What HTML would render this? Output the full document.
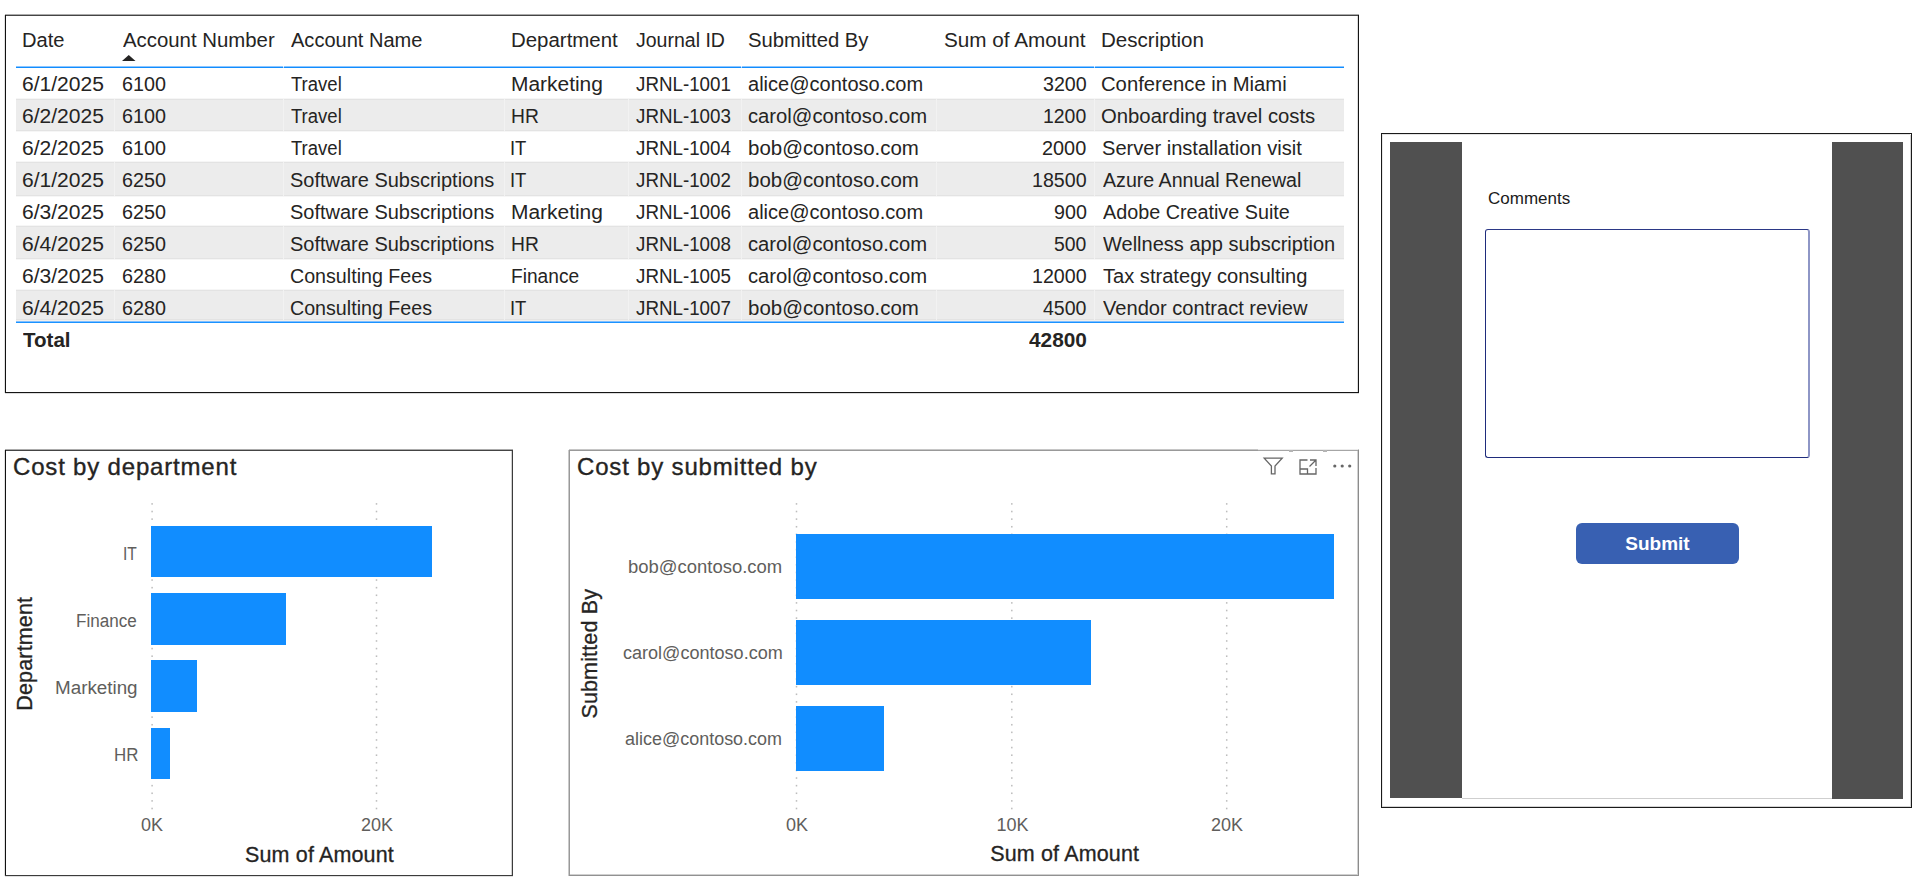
<!DOCTYPE html>
<html><head><meta charset="utf-8">
<style>
html,body{margin:0;padding:0;width:1920px;height:890px;overflow:hidden;background:#fff;}
body{font-family:"Liberation Sans",sans-serif;position:relative;color:#252423;}
.a{position:absolute;white-space:nowrap;}
.t{position:absolute;white-space:nowrap;font-size:20px;line-height:20px;}
.r{text-align:right;}
.g{position:absolute;left:16px;width:1328px;height:32px;background:#ebebeb;}
.v{position:absolute;width:1px;height:32px;background:#f2f2f2;}
.lab{position:absolute;white-space:nowrap;font-size:18px;line-height:18px;color:#605e5c;text-align:right;width:300px;}
.xl{position:absolute;white-space:nowrap;font-size:18px;line-height:18px;color:#605e5c;text-align:center;width:100px;}
.ttl{position:absolute;white-space:nowrap;font-size:24px;line-height:24px;letter-spacing:.82px;color:#252423;-webkit-text-stroke:.35px #252423;}
.axt{position:absolute;white-space:nowrap;font-size:21.5px;line-height:21.5px;letter-spacing:.15px;color:#252423;-webkit-text-stroke:.3px #252423;}
.bar{position:absolute;background:#118dff;}
svg{position:absolute;overflow:visible;}
</style></head><body>
<div class="a" style="left:5px;top:14px;width:1354px;height:1px;background:#ababab"></div><div class="a" style="left:4px;top:15px;width:1px;height:378px;background:#e2e2e2"></div><div class="a" style="left:1357px;top:16px;width:1px;height:376px;background:#dcdcdc"></div><div class="a" style="left:5px;top:393px;width:1354px;height:1px;background:#dcdcdc"></div><div class="a" style="left:5px;top:15px;width:1354px;height:1px;background:#444"></div><div class="a" style="left:5px;top:15px;width:1px;height:378px;background:#111"></div><div class="a" style="left:1358px;top:15px;width:1px;height:378px;background:#151515"></div><div class="a" style="left:5px;top:392px;width:1354px;height:1px;background:#151515"></div>
<div class="g" style="top:98px;height:1px;background:#f6f6f6"></div>
<div class="g" style="top:99px;height:32px;background:#ececec;border-top:1px solid #e3e3e3;border-bottom:1px solid #e3e3e3;box-sizing:border-box"></div>
<div class="g" style="top:131px;height:1px;background:#f6f6f6"></div>
<div class="v" style="left:114px;top:99px;height:32px"></div>
<div class="v" style="left:283px;top:99px;height:32px"></div>
<div class="v" style="left:504px;top:99px;height:32px"></div>
<div class="v" style="left:628px;top:99px;height:32px"></div>
<div class="v" style="left:741px;top:99px;height:32px"></div>
<div class="v" style="left:936px;top:99px;height:32px"></div>
<div class="v" style="left:1094px;top:99px;height:32px"></div>
<div class="g" style="top:161px;height:1px;background:#f6f6f6"></div>
<div class="g" style="top:162px;height:34px;background:#ececec;border-top:1px solid #e3e3e3;border-bottom:1px solid #e3e3e3;box-sizing:border-box"></div>
<div class="g" style="top:196px;height:1px;background:#f6f6f6"></div>
<div class="v" style="left:114px;top:162px;height:34px"></div>
<div class="v" style="left:283px;top:162px;height:34px"></div>
<div class="v" style="left:504px;top:162px;height:34px"></div>
<div class="v" style="left:628px;top:162px;height:34px"></div>
<div class="v" style="left:741px;top:162px;height:34px"></div>
<div class="v" style="left:936px;top:162px;height:34px"></div>
<div class="v" style="left:1094px;top:162px;height:34px"></div>
<div class="g" style="top:225px;height:1px;background:#f6f6f6"></div>
<div class="g" style="top:226px;height:33px;background:#ececec;border-top:1px solid #e3e3e3;border-bottom:1px solid #e3e3e3;box-sizing:border-box"></div>
<div class="g" style="top:259px;height:1px;background:#f6f6f6"></div>
<div class="v" style="left:114px;top:226px;height:33px"></div>
<div class="v" style="left:283px;top:226px;height:33px"></div>
<div class="v" style="left:504px;top:226px;height:33px"></div>
<div class="v" style="left:628px;top:226px;height:33px"></div>
<div class="v" style="left:741px;top:226px;height:33px"></div>
<div class="v" style="left:936px;top:226px;height:33px"></div>
<div class="v" style="left:1094px;top:226px;height:33px"></div>
<div class="g" style="top:289px;height:1px;background:#f6f6f6"></div>
<div class="g" style="top:290px;height:30px;background:#ececec;border-top:1px solid #e3e3e3;border-bottom:1px solid #e3e3e3;box-sizing:border-box"></div>
<div class="g" style="top:320px;height:1px;background:#f6f6f6"></div>
<div class="v" style="left:114px;top:290px;height:30px"></div>
<div class="v" style="left:283px;top:290px;height:30px"></div>
<div class="v" style="left:504px;top:290px;height:30px"></div>
<div class="v" style="left:628px;top:290px;height:30px"></div>
<div class="v" style="left:741px;top:290px;height:30px"></div>
<div class="v" style="left:936px;top:290px;height:30px"></div>
<div class="v" style="left:1094px;top:290px;height:30px"></div>
<div class="a" style="left:22.24px;top:30.07px;font-size:20px;line-height:20px;transform:scaleX(1.0061);transform-origin:0 0;">Date</div>
<div class="a" style="left:122.50px;top:30.07px;font-size:20px;line-height:20px;transform:scaleX(1.0185);transform-origin:0 0;">Account Number</div>
<div class="a" style="left:291.25px;top:30.07px;font-size:20px;line-height:20px;transform:scaleX(1.0019);transform-origin:0 0;">Account Name</div>
<div class="a" style="left:510.98px;top:30.07px;font-size:20px;line-height:20px;transform:scaleX(1.0216);transform-origin:0 0;">Department</div>
<div class="a" style="left:636.25px;top:30.07px;font-size:20px;line-height:20px;transform:scaleX(0.9753);transform-origin:0 0;">Journal ID</div>
<div class="a" style="left:748.24px;top:30.07px;font-size:20px;line-height:20px;transform:scaleX(1.0127);transform-origin:0 0;">Submitted By</div>
<div class="a" style="left:944.22px;top:30.07px;font-size:20px;line-height:20px;transform:scaleX(1.0349);transform-origin:0 0;">Sum of Amount</div>
<div class="a" style="left:1101.47px;top:30.07px;font-size:20px;line-height:20px;transform:scaleX(1.0281);transform-origin:0 0;">Description</div>
<svg style="left:0;top:0" width="1" height="1"><polygon points="122,61 135.5,61 128.75,55" fill="#252423"/></svg>
<div class="a" style="left:16px;top:66px;width:1328px;height:1px;background:#8cc6ff"></div>
<div class="a" style="left:16px;top:67px;width:1328px;height:1px;background:#118dff"></div>
<div class="a" style="left:283px;top:66px;width:1px;height:1px;background:#eef6ff"></div>
<div class="a" style="left:283px;top:67px;width:1px;height:1px;background:#b3d8ff"></div>
<div class="a" style="left:741px;top:66px;width:1px;height:1px;background:#eef6ff"></div>
<div class="a" style="left:741px;top:67px;width:1px;height:1px;background:#b3d8ff"></div>
<div class="a" style="left:1094px;top:66px;width:1px;height:1px;background:#eef6ff"></div>
<div class="a" style="left:1094px;top:67px;width:1px;height:1px;background:#b3d8ff"></div>
<div class="a" style="left:16px;top:320px;width:1328px;height:1px;background:#f3efea"></div>
<div class="a" style="left:16px;top:321px;width:1328px;height:1px;background:#80bfff"></div>
<div class="a" style="left:16px;top:322px;width:1328px;height:1px;background:#1a92ff"></div>
<div class="a" style="left:22.20px;top:73.57px;font-size:20px;line-height:20px;transform:scaleX(1.0526);transform-origin:0 0;">6/1/2025</div>
<div class="a" style="left:121.51px;top:73.57px;font-size:20px;line-height:20px;transform:scaleX(0.9884);transform-origin:0 0;">6100</div>
<div class="a" style="left:291.25px;top:73.57px;font-size:20px;line-height:20px;transform:scaleX(0.9259);transform-origin:0 0;">Travel</div>
<div class="a" style="left:510.95px;top:73.57px;font-size:20px;line-height:20px;transform:scaleX(1.0465);transform-origin:0 0;">Marketing</div>
<div class="a" style="left:636.25px;top:73.57px;font-size:20px;line-height:20px;transform:scaleX(0.9381);transform-origin:0 0;">JRNL-1001</div>
<div class="a" style="left:748.25px;top:73.57px;font-size:20px;line-height:20px;transform:scaleX(1.0014);transform-origin:0 0;">alice@contoso.com</div>
<div class="a" style="left:1042.77px;top:73.57px;font-size:20px;line-height:20px;transform:scaleX(0.9826);transform-origin:0 0;">3200</div>
<div class="a" style="left:1101.49px;top:73.57px;font-size:20px;line-height:20px;transform:scaleX(1.0124);transform-origin:0 0;">Conference in Miami</div>
<div class="a" style="left:22.20px;top:105.57px;font-size:20px;line-height:20px;transform:scaleX(1.0526);transform-origin:0 0;">6/2/2025</div>
<div class="a" style="left:121.51px;top:105.57px;font-size:20px;line-height:20px;transform:scaleX(0.9884);transform-origin:0 0;">6100</div>
<div class="a" style="left:291.25px;top:105.57px;font-size:20px;line-height:20px;transform:scaleX(0.9259);transform-origin:0 0;">Travel</div>
<div class="a" style="left:511.04px;top:105.57px;font-size:20px;line-height:20px;transform:scaleX(0.9630);transform-origin:0 0;">HR</div>
<div class="a" style="left:636.25px;top:105.57px;font-size:20px;line-height:20px;transform:scaleX(0.9381);transform-origin:0 0;">JRNL-1003</div>
<div class="a" style="left:748.24px;top:105.57px;font-size:20px;line-height:20px;transform:scaleX(1.0114);transform-origin:0 0;">carol@contoso.com</div>
<div class="a" style="left:1043.28px;top:105.57px;font-size:20px;line-height:20px;transform:scaleX(0.9709);transform-origin:0 0;">1200</div>
<div class="a" style="left:1101.49px;top:105.57px;font-size:20px;line-height:20px;transform:scaleX(1.0143);transform-origin:0 0;">Onboarding travel costs</div>
<div class="a" style="left:22.20px;top:137.57px;font-size:20px;line-height:20px;transform:scaleX(1.0526);transform-origin:0 0;">6/2/2025</div>
<div class="a" style="left:121.51px;top:137.57px;font-size:20px;line-height:20px;transform:scaleX(0.9884);transform-origin:0 0;">6100</div>
<div class="a" style="left:291.25px;top:137.57px;font-size:20px;line-height:20px;transform:scaleX(0.9259);transform-origin:0 0;">Travel</div>
<div class="a" style="left:510.16px;top:137.57px;font-size:20px;line-height:20px;transform:scaleX(0.9219);transform-origin:0 0;">IT</div>
<div class="a" style="left:636.25px;top:137.57px;font-size:20px;line-height:20px;transform:scaleX(0.9381);transform-origin:0 0;">JRNL-1004</div>
<div class="a" style="left:748.23px;top:137.57px;font-size:20px;line-height:20px;transform:scaleX(1.0227);transform-origin:0 0;">bob@contoso.com</div>
<div class="a" style="left:1042.26px;top:137.57px;font-size:20px;line-height:20px;transform:scaleX(0.9942);transform-origin:0 0;">2000</div>
<div class="a" style="left:1101.50px;top:137.57px;font-size:20px;line-height:20px;transform:scaleX(1.0038);transform-origin:0 0;">Server installation visit</div>
<div class="a" style="left:22.20px;top:169.57px;font-size:20px;line-height:20px;transform:scaleX(1.0526);transform-origin:0 0;">6/1/2025</div>
<div class="a" style="left:121.51px;top:169.57px;font-size:20px;line-height:20px;transform:scaleX(0.9884);transform-origin:0 0;">6250</div>
<div class="a" style="left:290.25px;top:169.57px;font-size:20px;line-height:20px;transform:scaleX(0.9988);transform-origin:0 0;">Software Subscriptions</div>
<div class="a" style="left:510.16px;top:169.57px;font-size:20px;line-height:20px;transform:scaleX(0.9219);transform-origin:0 0;">IT</div>
<div class="a" style="left:636.25px;top:169.57px;font-size:20px;line-height:20px;transform:scaleX(0.9381);transform-origin:0 0;">JRNL-1002</div>
<div class="a" style="left:748.23px;top:169.57px;font-size:20px;line-height:20px;transform:scaleX(1.0227);transform-origin:0 0;">bob@contoso.com</div>
<div class="a" style="left:1032.02px;top:169.57px;font-size:20px;line-height:20px;transform:scaleX(0.9815);transform-origin:0 0;">18500</div>
<div class="a" style="left:1102.50px;top:169.57px;font-size:20px;line-height:20px;transform:scaleX(0.9802);transform-origin:0 0;">Azure Annual Renewal</div>
<div class="a" style="left:22.20px;top:201.57px;font-size:20px;line-height:20px;transform:scaleX(1.0526);transform-origin:0 0;">6/3/2025</div>
<div class="a" style="left:121.51px;top:201.57px;font-size:20px;line-height:20px;transform:scaleX(0.9884);transform-origin:0 0;">6250</div>
<div class="a" style="left:290.25px;top:201.57px;font-size:20px;line-height:20px;transform:scaleX(0.9988);transform-origin:0 0;">Software Subscriptions</div>
<div class="a" style="left:510.95px;top:201.57px;font-size:20px;line-height:20px;transform:scaleX(1.0465);transform-origin:0 0;">Marketing</div>
<div class="a" style="left:636.25px;top:201.57px;font-size:20px;line-height:20px;transform:scaleX(0.9381);transform-origin:0 0;">JRNL-1006</div>
<div class="a" style="left:748.25px;top:201.57px;font-size:20px;line-height:20px;transform:scaleX(1.0014);transform-origin:0 0;">alice@contoso.com</div>
<div class="a" style="left:1053.52px;top:201.57px;font-size:20px;line-height:20px;transform:scaleX(0.9844);transform-origin:0 0;">900</div>
<div class="a" style="left:1102.50px;top:201.57px;font-size:20px;line-height:20px;transform:scaleX(0.9881);transform-origin:0 0;">Adobe Creative Suite</div>
<div class="a" style="left:22.20px;top:233.57px;font-size:20px;line-height:20px;transform:scaleX(1.0526);transform-origin:0 0;">6/4/2025</div>
<div class="a" style="left:121.51px;top:233.57px;font-size:20px;line-height:20px;transform:scaleX(0.9884);transform-origin:0 0;">6250</div>
<div class="a" style="left:290.25px;top:233.57px;font-size:20px;line-height:20px;transform:scaleX(0.9988);transform-origin:0 0;">Software Subscriptions</div>
<div class="a" style="left:511.04px;top:233.57px;font-size:20px;line-height:20px;transform:scaleX(0.9630);transform-origin:0 0;">HR</div>
<div class="a" style="left:636.25px;top:233.57px;font-size:20px;line-height:20px;transform:scaleX(0.9381);transform-origin:0 0;">JRNL-1008</div>
<div class="a" style="left:748.24px;top:233.57px;font-size:20px;line-height:20px;transform:scaleX(1.0114);transform-origin:0 0;">carol@contoso.com</div>
<div class="a" style="left:1054.03px;top:233.57px;font-size:20px;line-height:20px;transform:scaleX(0.9688);transform-origin:0 0;">500</div>
<div class="a" style="left:1102.50px;top:233.57px;font-size:20px;line-height:20px;transform:scaleX(1.0011);transform-origin:0 0;">Wellness app subscription</div>
<div class="a" style="left:22.20px;top:265.57px;font-size:20px;line-height:20px;transform:scaleX(1.0526);transform-origin:0 0;">6/3/2025</div>
<div class="a" style="left:121.51px;top:265.57px;font-size:20px;line-height:20px;transform:scaleX(0.9884);transform-origin:0 0;">6280</div>
<div class="a" style="left:290.27px;top:265.57px;font-size:20px;line-height:20px;transform:scaleX(0.9825);transform-origin:0 0;">Consulting Fees</div>
<div class="a" style="left:511.04px;top:265.57px;font-size:20px;line-height:20px;transform:scaleX(0.9571);transform-origin:0 0;">Finance</div>
<div class="a" style="left:636.25px;top:265.57px;font-size:20px;line-height:20px;transform:scaleX(0.9381);transform-origin:0 0;">JRNL-1005</div>
<div class="a" style="left:748.24px;top:265.57px;font-size:20px;line-height:20px;transform:scaleX(1.0114);transform-origin:0 0;">carol@contoso.com</div>
<div class="a" style="left:1032.02px;top:265.57px;font-size:20px;line-height:20px;transform:scaleX(0.9815);transform-origin:0 0;">12000</div>
<div class="a" style="left:1102.50px;top:265.57px;font-size:20px;line-height:20px;transform:scaleX(1.0050);transform-origin:0 0;">Tax strategy consulting</div>
<div class="a" style="left:22.20px;top:297.57px;font-size:20px;line-height:20px;transform:scaleX(1.0526);transform-origin:0 0;">6/4/2025</div>
<div class="a" style="left:121.51px;top:297.57px;font-size:20px;line-height:20px;transform:scaleX(0.9884);transform-origin:0 0;">6280</div>
<div class="a" style="left:290.27px;top:297.57px;font-size:20px;line-height:20px;transform:scaleX(0.9825);transform-origin:0 0;">Consulting Fees</div>
<div class="a" style="left:510.16px;top:297.57px;font-size:20px;line-height:20px;transform:scaleX(0.9219);transform-origin:0 0;">IT</div>
<div class="a" style="left:636.25px;top:297.57px;font-size:20px;line-height:20px;transform:scaleX(0.9381);transform-origin:0 0;">JRNL-1007</div>
<div class="a" style="left:748.23px;top:297.57px;font-size:20px;line-height:20px;transform:scaleX(1.0227);transform-origin:0 0;">bob@contoso.com</div>
<div class="a" style="left:1043.00px;top:297.57px;font-size:20px;line-height:20px;transform:scaleX(0.9773);transform-origin:0 0;">4500</div>
<div class="a" style="left:1102.50px;top:297.57px;font-size:20px;line-height:20px;transform:scaleX(1.0049);transform-origin:0 0;">Vendor contract review</div>
<div class="a" style="left:23.25px;top:330.07px;font-size:20px;line-height:20px;transform:scaleX(1.0278);transform-origin:0 0;font-weight:bold">Total</div>
<div class="a" style="left:1028.75px;top:330.07px;font-size:20px;line-height:20px;transform:scaleX(1.0409);transform-origin:0 0;font-weight:bold">42800</div>
<div class="a" style="left:5px;top:449px;width:508px;height:1px;background:#ababab"></div><div class="a" style="left:4px;top:450px;width:1px;height:426px;background:#e2e2e2"></div><div class="a" style="left:511px;top:451px;width:1px;height:424px;background:#d0d0d0"></div><div class="a" style="left:5px;top:876px;width:508px;height:1px;background:#e0e0e0"></div><div class="a" style="left:5px;top:450px;width:508px;height:1px;background:#444"></div><div class="a" style="left:5px;top:450px;width:1px;height:426px;background:#111"></div><div class="a" style="left:512px;top:450px;width:1px;height:426px;background:#3c3c3c"></div><div class="a" style="left:5px;top:875px;width:508px;height:1px;background:#3c3c3c"></div>
<div class="ttl" style="left:13px;top:454.68px">Cost by department</div>
<svg style="left:0;top:0" width="1" height="1"><rect x="151.35" y="503.10" width="1.5" height="1.6" fill="#bdbdbd"/><rect x="151.35" y="510.72" width="1.5" height="1.6" fill="#bdbdbd"/><rect x="151.35" y="518.33" width="1.5" height="1.6" fill="#bdbdbd"/><rect x="151.35" y="525.95" width="1.5" height="1.6" fill="#bdbdbd"/><rect x="151.35" y="533.56" width="1.5" height="1.6" fill="#bdbdbd"/><rect x="151.35" y="541.18" width="1.5" height="1.6" fill="#bdbdbd"/><rect x="151.35" y="548.79" width="1.5" height="1.6" fill="#bdbdbd"/><rect x="151.35" y="556.41" width="1.5" height="1.6" fill="#bdbdbd"/><rect x="151.35" y="564.02" width="1.5" height="1.6" fill="#bdbdbd"/><rect x="151.35" y="571.64" width="1.5" height="1.6" fill="#bdbdbd"/><rect x="151.35" y="579.25" width="1.5" height="1.6" fill="#bdbdbd"/><rect x="151.35" y="586.87" width="1.5" height="1.6" fill="#bdbdbd"/><rect x="151.35" y="594.48" width="1.5" height="1.6" fill="#bdbdbd"/><rect x="151.35" y="602.10" width="1.5" height="1.6" fill="#bdbdbd"/><rect x="151.35" y="609.71" width="1.5" height="1.6" fill="#bdbdbd"/><rect x="151.35" y="617.33" width="1.5" height="1.6" fill="#bdbdbd"/><rect x="151.35" y="624.94" width="1.5" height="1.6" fill="#bdbdbd"/><rect x="151.35" y="632.56" width="1.5" height="1.6" fill="#bdbdbd"/><rect x="151.35" y="640.17" width="1.5" height="1.6" fill="#bdbdbd"/><rect x="151.35" y="647.79" width="1.5" height="1.6" fill="#bdbdbd"/><rect x="151.35" y="655.40" width="1.5" height="1.6" fill="#bdbdbd"/><rect x="151.35" y="663.02" width="1.5" height="1.6" fill="#bdbdbd"/><rect x="151.35" y="670.63" width="1.5" height="1.6" fill="#bdbdbd"/><rect x="151.35" y="678.25" width="1.5" height="1.6" fill="#bdbdbd"/><rect x="151.35" y="685.86" width="1.5" height="1.6" fill="#bdbdbd"/><rect x="151.35" y="693.48" width="1.5" height="1.6" fill="#bdbdbd"/><rect x="151.35" y="701.09" width="1.5" height="1.6" fill="#bdbdbd"/><rect x="151.35" y="708.71" width="1.5" height="1.6" fill="#bdbdbd"/><rect x="151.35" y="716.32" width="1.5" height="1.6" fill="#bdbdbd"/><rect x="151.35" y="723.94" width="1.5" height="1.6" fill="#bdbdbd"/><rect x="151.35" y="731.55" width="1.5" height="1.6" fill="#bdbdbd"/><rect x="151.35" y="739.17" width="1.5" height="1.6" fill="#bdbdbd"/><rect x="151.35" y="746.78" width="1.5" height="1.6" fill="#bdbdbd"/><rect x="151.35" y="754.40" width="1.5" height="1.6" fill="#bdbdbd"/><rect x="151.35" y="762.01" width="1.5" height="1.6" fill="#bdbdbd"/><rect x="151.35" y="769.63" width="1.5" height="1.6" fill="#bdbdbd"/><rect x="151.35" y="777.24" width="1.5" height="1.6" fill="#bdbdbd"/><rect x="151.35" y="784.86" width="1.5" height="1.6" fill="#bdbdbd"/><rect x="151.35" y="792.47" width="1.5" height="1.6" fill="#bdbdbd"/><rect x="151.35" y="800.09" width="1.5" height="1.6" fill="#bdbdbd"/><rect x="151.35" y="807.70" width="1.5" height="1.6" fill="#bdbdbd"/></svg>
<svg style="left:0;top:0" width="1" height="1"><rect x="375.75" y="503.10" width="1.5" height="1.6" fill="#bdbdbd"/><rect x="375.75" y="510.72" width="1.5" height="1.6" fill="#bdbdbd"/><rect x="375.75" y="518.33" width="1.5" height="1.6" fill="#bdbdbd"/><rect x="375.75" y="525.95" width="1.5" height="1.6" fill="#bdbdbd"/><rect x="375.75" y="533.56" width="1.5" height="1.6" fill="#bdbdbd"/><rect x="375.75" y="541.18" width="1.5" height="1.6" fill="#bdbdbd"/><rect x="375.75" y="548.79" width="1.5" height="1.6" fill="#bdbdbd"/><rect x="375.75" y="556.41" width="1.5" height="1.6" fill="#bdbdbd"/><rect x="375.75" y="564.02" width="1.5" height="1.6" fill="#bdbdbd"/><rect x="375.75" y="571.64" width="1.5" height="1.6" fill="#bdbdbd"/><rect x="375.75" y="579.25" width="1.5" height="1.6" fill="#bdbdbd"/><rect x="375.75" y="586.87" width="1.5" height="1.6" fill="#bdbdbd"/><rect x="375.75" y="594.48" width="1.5" height="1.6" fill="#bdbdbd"/><rect x="375.75" y="602.10" width="1.5" height="1.6" fill="#bdbdbd"/><rect x="375.75" y="609.71" width="1.5" height="1.6" fill="#bdbdbd"/><rect x="375.75" y="617.33" width="1.5" height="1.6" fill="#bdbdbd"/><rect x="375.75" y="624.94" width="1.5" height="1.6" fill="#bdbdbd"/><rect x="375.75" y="632.56" width="1.5" height="1.6" fill="#bdbdbd"/><rect x="375.75" y="640.17" width="1.5" height="1.6" fill="#bdbdbd"/><rect x="375.75" y="647.79" width="1.5" height="1.6" fill="#bdbdbd"/><rect x="375.75" y="655.40" width="1.5" height="1.6" fill="#bdbdbd"/><rect x="375.75" y="663.02" width="1.5" height="1.6" fill="#bdbdbd"/><rect x="375.75" y="670.63" width="1.5" height="1.6" fill="#bdbdbd"/><rect x="375.75" y="678.25" width="1.5" height="1.6" fill="#bdbdbd"/><rect x="375.75" y="685.86" width="1.5" height="1.6" fill="#bdbdbd"/><rect x="375.75" y="693.48" width="1.5" height="1.6" fill="#bdbdbd"/><rect x="375.75" y="701.09" width="1.5" height="1.6" fill="#bdbdbd"/><rect x="375.75" y="708.71" width="1.5" height="1.6" fill="#bdbdbd"/><rect x="375.75" y="716.32" width="1.5" height="1.6" fill="#bdbdbd"/><rect x="375.75" y="723.94" width="1.5" height="1.6" fill="#bdbdbd"/><rect x="375.75" y="731.55" width="1.5" height="1.6" fill="#bdbdbd"/><rect x="375.75" y="739.17" width="1.5" height="1.6" fill="#bdbdbd"/><rect x="375.75" y="746.78" width="1.5" height="1.6" fill="#bdbdbd"/><rect x="375.75" y="754.40" width="1.5" height="1.6" fill="#bdbdbd"/><rect x="375.75" y="762.01" width="1.5" height="1.6" fill="#bdbdbd"/><rect x="375.75" y="769.63" width="1.5" height="1.6" fill="#bdbdbd"/><rect x="375.75" y="777.24" width="1.5" height="1.6" fill="#bdbdbd"/><rect x="375.75" y="784.86" width="1.5" height="1.6" fill="#bdbdbd"/><rect x="375.75" y="792.47" width="1.5" height="1.6" fill="#bdbdbd"/><rect x="375.75" y="800.09" width="1.5" height="1.6" fill="#bdbdbd"/><rect x="375.75" y="807.70" width="1.5" height="1.6" fill="#bdbdbd"/></svg>
<div class="bar" style="left:151px;top:526.2px;width:281.0px;height:51.3px"></div>
<div class="a" style="left:123.13px;top:544.51px;font-size:18px;line-height:18px;transform:scaleX(0.8667);transform-origin:0 0;color:#605e5c">IT</div>
<div class="bar" style="left:151px;top:593.3px;width:134.9px;height:51.3px"></div>
<div class="a" style="left:76.05px;top:611.61px;font-size:18px;line-height:18px;transform:scaleX(0.9484);transform-origin:0 0;color:#605e5c">Finance</div>
<div class="bar" style="left:151px;top:660.4px;width:46.1px;height:51.3px"></div>
<div class="a" style="left:55.26px;top:678.71px;font-size:18px;line-height:18px;transform:scaleX(1.0448);transform-origin:0 0;color:#605e5c">Marketing</div>
<div class="bar" style="left:151px;top:727.5px;width:19.1px;height:51.3px"></div>
<div class="a" style="left:114.06px;top:745.81px;font-size:18px;line-height:18px;transform:scaleX(0.9375);transform-origin:0 0;color:#605e5c">HR</div>
<div class="xl" style="left:102px;top:816.16px">0K</div>
<div class="xl" style="left:327px;top:816.16px">20K</div>
<div class="axt" style="left:169.5px;width:300px;text-align:center;top:844.80px">Sum of Amount</div>
<div class="axt" style="left:-124.15px;top:642.55px;width:300px;text-align:center;transform:rotate(-90deg);">Department</div>
<div class="a" style="left:569px;top:449px;width:790px;height:1px;background:#c6c6c6"></div><div class="a" style="left:568px;top:450px;width:1px;height:426px;background:#cacaca"></div><div class="a" style="left:1357px;top:451px;width:1px;height:423px;background:#d2d2d2"></div><div class="a" style="left:570px;top:874px;width:788px;height:1px;background:#d0d0d0"></div><div class="a" style="left:569px;top:450px;width:790px;height:1px;background:#999"></div><div class="a" style="left:569px;top:450px;width:1px;height:426px;background:#999"></div><div class="a" style="left:1358px;top:450px;width:1px;height:426px;background:#8c8c8c"></div><div class="a" style="left:569px;top:875px;width:790px;height:1px;background:#919191"></div><div class="a" style="left:1258px;top:449px;width:100px;height:1px;background:#ececec"></div><div class="a" style="left:1258px;top:450px;width:100px;height:1px;background:#a6a6a6"></div><div class="a" style="left:1289px;top:450px;width:4px;height:2px;background:#b4b4b4"></div><div class="a" style="left:1323px;top:450px;width:4px;height:2px;background:#b4b4b4"></div>
<div class="ttl" style="left:577px;top:454.68px">Cost by submitted by</div>
<svg style="left:0;top:0" width="1" height="1"><rect x="795.75" y="503.10" width="1.5" height="1.6" fill="#bdbdbd"/><rect x="795.75" y="510.72" width="1.5" height="1.6" fill="#bdbdbd"/><rect x="795.75" y="518.33" width="1.5" height="1.6" fill="#bdbdbd"/><rect x="795.75" y="525.95" width="1.5" height="1.6" fill="#bdbdbd"/><rect x="795.75" y="533.56" width="1.5" height="1.6" fill="#bdbdbd"/><rect x="795.75" y="541.18" width="1.5" height="1.6" fill="#bdbdbd"/><rect x="795.75" y="548.79" width="1.5" height="1.6" fill="#bdbdbd"/><rect x="795.75" y="556.41" width="1.5" height="1.6" fill="#bdbdbd"/><rect x="795.75" y="564.02" width="1.5" height="1.6" fill="#bdbdbd"/><rect x="795.75" y="571.64" width="1.5" height="1.6" fill="#bdbdbd"/><rect x="795.75" y="579.25" width="1.5" height="1.6" fill="#bdbdbd"/><rect x="795.75" y="586.87" width="1.5" height="1.6" fill="#bdbdbd"/><rect x="795.75" y="594.48" width="1.5" height="1.6" fill="#bdbdbd"/><rect x="795.75" y="602.10" width="1.5" height="1.6" fill="#bdbdbd"/><rect x="795.75" y="609.71" width="1.5" height="1.6" fill="#bdbdbd"/><rect x="795.75" y="617.33" width="1.5" height="1.6" fill="#bdbdbd"/><rect x="795.75" y="624.94" width="1.5" height="1.6" fill="#bdbdbd"/><rect x="795.75" y="632.56" width="1.5" height="1.6" fill="#bdbdbd"/><rect x="795.75" y="640.17" width="1.5" height="1.6" fill="#bdbdbd"/><rect x="795.75" y="647.79" width="1.5" height="1.6" fill="#bdbdbd"/><rect x="795.75" y="655.40" width="1.5" height="1.6" fill="#bdbdbd"/><rect x="795.75" y="663.02" width="1.5" height="1.6" fill="#bdbdbd"/><rect x="795.75" y="670.63" width="1.5" height="1.6" fill="#bdbdbd"/><rect x="795.75" y="678.25" width="1.5" height="1.6" fill="#bdbdbd"/><rect x="795.75" y="685.86" width="1.5" height="1.6" fill="#bdbdbd"/><rect x="795.75" y="693.48" width="1.5" height="1.6" fill="#bdbdbd"/><rect x="795.75" y="701.09" width="1.5" height="1.6" fill="#bdbdbd"/><rect x="795.75" y="708.71" width="1.5" height="1.6" fill="#bdbdbd"/><rect x="795.75" y="716.32" width="1.5" height="1.6" fill="#bdbdbd"/><rect x="795.75" y="723.94" width="1.5" height="1.6" fill="#bdbdbd"/><rect x="795.75" y="731.55" width="1.5" height="1.6" fill="#bdbdbd"/><rect x="795.75" y="739.17" width="1.5" height="1.6" fill="#bdbdbd"/><rect x="795.75" y="746.78" width="1.5" height="1.6" fill="#bdbdbd"/><rect x="795.75" y="754.40" width="1.5" height="1.6" fill="#bdbdbd"/><rect x="795.75" y="762.01" width="1.5" height="1.6" fill="#bdbdbd"/><rect x="795.75" y="769.63" width="1.5" height="1.6" fill="#bdbdbd"/><rect x="795.75" y="777.24" width="1.5" height="1.6" fill="#bdbdbd"/><rect x="795.75" y="784.86" width="1.5" height="1.6" fill="#bdbdbd"/><rect x="795.75" y="792.47" width="1.5" height="1.6" fill="#bdbdbd"/><rect x="795.75" y="800.09" width="1.5" height="1.6" fill="#bdbdbd"/><rect x="795.75" y="807.70" width="1.5" height="1.6" fill="#bdbdbd"/></svg>
<svg style="left:0;top:0" width="1" height="1"><rect x="1011.05" y="503.10" width="1.5" height="1.6" fill="#bdbdbd"/><rect x="1011.05" y="510.72" width="1.5" height="1.6" fill="#bdbdbd"/><rect x="1011.05" y="518.33" width="1.5" height="1.6" fill="#bdbdbd"/><rect x="1011.05" y="525.95" width="1.5" height="1.6" fill="#bdbdbd"/><rect x="1011.05" y="533.56" width="1.5" height="1.6" fill="#bdbdbd"/><rect x="1011.05" y="541.18" width="1.5" height="1.6" fill="#bdbdbd"/><rect x="1011.05" y="548.79" width="1.5" height="1.6" fill="#bdbdbd"/><rect x="1011.05" y="556.41" width="1.5" height="1.6" fill="#bdbdbd"/><rect x="1011.05" y="564.02" width="1.5" height="1.6" fill="#bdbdbd"/><rect x="1011.05" y="571.64" width="1.5" height="1.6" fill="#bdbdbd"/><rect x="1011.05" y="579.25" width="1.5" height="1.6" fill="#bdbdbd"/><rect x="1011.05" y="586.87" width="1.5" height="1.6" fill="#bdbdbd"/><rect x="1011.05" y="594.48" width="1.5" height="1.6" fill="#bdbdbd"/><rect x="1011.05" y="602.10" width="1.5" height="1.6" fill="#bdbdbd"/><rect x="1011.05" y="609.71" width="1.5" height="1.6" fill="#bdbdbd"/><rect x="1011.05" y="617.33" width="1.5" height="1.6" fill="#bdbdbd"/><rect x="1011.05" y="624.94" width="1.5" height="1.6" fill="#bdbdbd"/><rect x="1011.05" y="632.56" width="1.5" height="1.6" fill="#bdbdbd"/><rect x="1011.05" y="640.17" width="1.5" height="1.6" fill="#bdbdbd"/><rect x="1011.05" y="647.79" width="1.5" height="1.6" fill="#bdbdbd"/><rect x="1011.05" y="655.40" width="1.5" height="1.6" fill="#bdbdbd"/><rect x="1011.05" y="663.02" width="1.5" height="1.6" fill="#bdbdbd"/><rect x="1011.05" y="670.63" width="1.5" height="1.6" fill="#bdbdbd"/><rect x="1011.05" y="678.25" width="1.5" height="1.6" fill="#bdbdbd"/><rect x="1011.05" y="685.86" width="1.5" height="1.6" fill="#bdbdbd"/><rect x="1011.05" y="693.48" width="1.5" height="1.6" fill="#bdbdbd"/><rect x="1011.05" y="701.09" width="1.5" height="1.6" fill="#bdbdbd"/><rect x="1011.05" y="708.71" width="1.5" height="1.6" fill="#bdbdbd"/><rect x="1011.05" y="716.32" width="1.5" height="1.6" fill="#bdbdbd"/><rect x="1011.05" y="723.94" width="1.5" height="1.6" fill="#bdbdbd"/><rect x="1011.05" y="731.55" width="1.5" height="1.6" fill="#bdbdbd"/><rect x="1011.05" y="739.17" width="1.5" height="1.6" fill="#bdbdbd"/><rect x="1011.05" y="746.78" width="1.5" height="1.6" fill="#bdbdbd"/><rect x="1011.05" y="754.40" width="1.5" height="1.6" fill="#bdbdbd"/><rect x="1011.05" y="762.01" width="1.5" height="1.6" fill="#bdbdbd"/><rect x="1011.05" y="769.63" width="1.5" height="1.6" fill="#bdbdbd"/><rect x="1011.05" y="777.24" width="1.5" height="1.6" fill="#bdbdbd"/><rect x="1011.05" y="784.86" width="1.5" height="1.6" fill="#bdbdbd"/><rect x="1011.05" y="792.47" width="1.5" height="1.6" fill="#bdbdbd"/><rect x="1011.05" y="800.09" width="1.5" height="1.6" fill="#bdbdbd"/><rect x="1011.05" y="807.70" width="1.5" height="1.6" fill="#bdbdbd"/></svg>
<svg style="left:0;top:0" width="1" height="1"><rect x="1225.95" y="503.10" width="1.5" height="1.6" fill="#bdbdbd"/><rect x="1225.95" y="510.72" width="1.5" height="1.6" fill="#bdbdbd"/><rect x="1225.95" y="518.33" width="1.5" height="1.6" fill="#bdbdbd"/><rect x="1225.95" y="525.95" width="1.5" height="1.6" fill="#bdbdbd"/><rect x="1225.95" y="533.56" width="1.5" height="1.6" fill="#bdbdbd"/><rect x="1225.95" y="541.18" width="1.5" height="1.6" fill="#bdbdbd"/><rect x="1225.95" y="548.79" width="1.5" height="1.6" fill="#bdbdbd"/><rect x="1225.95" y="556.41" width="1.5" height="1.6" fill="#bdbdbd"/><rect x="1225.95" y="564.02" width="1.5" height="1.6" fill="#bdbdbd"/><rect x="1225.95" y="571.64" width="1.5" height="1.6" fill="#bdbdbd"/><rect x="1225.95" y="579.25" width="1.5" height="1.6" fill="#bdbdbd"/><rect x="1225.95" y="586.87" width="1.5" height="1.6" fill="#bdbdbd"/><rect x="1225.95" y="594.48" width="1.5" height="1.6" fill="#bdbdbd"/><rect x="1225.95" y="602.10" width="1.5" height="1.6" fill="#bdbdbd"/><rect x="1225.95" y="609.71" width="1.5" height="1.6" fill="#bdbdbd"/><rect x="1225.95" y="617.33" width="1.5" height="1.6" fill="#bdbdbd"/><rect x="1225.95" y="624.94" width="1.5" height="1.6" fill="#bdbdbd"/><rect x="1225.95" y="632.56" width="1.5" height="1.6" fill="#bdbdbd"/><rect x="1225.95" y="640.17" width="1.5" height="1.6" fill="#bdbdbd"/><rect x="1225.95" y="647.79" width="1.5" height="1.6" fill="#bdbdbd"/><rect x="1225.95" y="655.40" width="1.5" height="1.6" fill="#bdbdbd"/><rect x="1225.95" y="663.02" width="1.5" height="1.6" fill="#bdbdbd"/><rect x="1225.95" y="670.63" width="1.5" height="1.6" fill="#bdbdbd"/><rect x="1225.95" y="678.25" width="1.5" height="1.6" fill="#bdbdbd"/><rect x="1225.95" y="685.86" width="1.5" height="1.6" fill="#bdbdbd"/><rect x="1225.95" y="693.48" width="1.5" height="1.6" fill="#bdbdbd"/><rect x="1225.95" y="701.09" width="1.5" height="1.6" fill="#bdbdbd"/><rect x="1225.95" y="708.71" width="1.5" height="1.6" fill="#bdbdbd"/><rect x="1225.95" y="716.32" width="1.5" height="1.6" fill="#bdbdbd"/><rect x="1225.95" y="723.94" width="1.5" height="1.6" fill="#bdbdbd"/><rect x="1225.95" y="731.55" width="1.5" height="1.6" fill="#bdbdbd"/><rect x="1225.95" y="739.17" width="1.5" height="1.6" fill="#bdbdbd"/><rect x="1225.95" y="746.78" width="1.5" height="1.6" fill="#bdbdbd"/><rect x="1225.95" y="754.40" width="1.5" height="1.6" fill="#bdbdbd"/><rect x="1225.95" y="762.01" width="1.5" height="1.6" fill="#bdbdbd"/><rect x="1225.95" y="769.63" width="1.5" height="1.6" fill="#bdbdbd"/><rect x="1225.95" y="777.24" width="1.5" height="1.6" fill="#bdbdbd"/><rect x="1225.95" y="784.86" width="1.5" height="1.6" fill="#bdbdbd"/><rect x="1225.95" y="792.47" width="1.5" height="1.6" fill="#bdbdbd"/><rect x="1225.95" y="800.09" width="1.5" height="1.6" fill="#bdbdbd"/><rect x="1225.95" y="807.70" width="1.5" height="1.6" fill="#bdbdbd"/></svg>
<div class="bar" style="left:796px;top:533.8px;width:537.9px;height:65.1px"></div>
<div class="a" style="left:628.17px;top:558.31px;font-size:18px;line-height:18px;transform:scaleX(1.0257);transform-origin:0 0;color:#605e5c">bob@contoso.com</div>
<div class="bar" style="left:796px;top:619.6px;width:294.8px;height:65.1px"></div>
<div class="a" style="left:622.60px;top:644.16px;font-size:18px;line-height:18px;transform:scaleX(1.0025);transform-origin:0 0;color:#605e5c">carol@contoso.com</div>
<div class="bar" style="left:796px;top:705.5px;width:88.2px;height:65.1px"></div>
<div class="a" style="left:625.30px;top:730.01px;font-size:18px;line-height:18px;transform:scaleX(0.9981);transform-origin:0 0;color:#605e5c">alice@contoso.com</div>
<div class="xl" style="left:747px;top:815.76px">0K</div>
<div class="xl" style="left:962.5px;top:815.76px">10K</div>
<div class="xl" style="left:1177px;top:815.76px">20K</div>
<div class="axt" style="left:914.7px;width:300px;text-align:center;top:844.30px">Sum of Amount</div>
<div class="axt" style="left:440.55px;top:642.65px;width:300px;text-align:center;transform:rotate(-90deg);">Submitted By</div>
<svg style="left:0;top:0" width="1" height="1">
<path d="M1264.2,458.2 H1282.2 L1275,466 V473.8 H1271.4 V466 Z" fill="none" stroke="#666" stroke-width="1.3" stroke-linejoin="miter"/>
<path d="M1307.5,460 H1300 V474 H1316 V468" fill="none" stroke="#666" stroke-width="1.3"/>
<path d="M1300,469 H1307.5 V474" fill="none" stroke="#666" stroke-width="1.3"/>
<path d="M1310,460 H1316 V466 M1316,460 L1309.5,466.5" fill="none" stroke="#666" stroke-width="1.3"/>
<circle cx="1334.8" cy="466" r="1.6" fill="#666"/><circle cx="1342.2" cy="466" r="1.6" fill="#666"/><circle cx="1349.7" cy="466" r="1.6" fill="#666"/>
</svg>
<div class="a" style="left:1381px;top:133px;width:529px;height:673px;border:1px solid #1a1a1a;"></div>
<div class="a" style="left:1390px;top:142px;width:72px;height:656px;background:#505050"></div>
<div class="a" style="left:1832px;top:142px;width:71px;height:657px;background:#505050"></div>
<div class="a" style="left:1382px;top:806px;width:529px;height:1px;background:#d4d4d4"></div>
<div class="a" style="left:1910px;top:135px;width:1px;height:671px;background:#d4d4d4"></div>
<div class="a" style="left:1382px;top:134px;width:528px;height:1px;background:#e4e4e4"></div>
<div class="a" style="left:1382px;top:135px;width:1px;height:671px;background:#e8e8e8"></div>
<div class="a" style="left:1462px;top:798px;width:370px;height:1px;background:#cfcfcf"></div>
<div class="a" style="left:1488px;top:189.61px;font-size:17px;line-height:17px;color:#1b1b1b">Comments</div>
<div class="a" style="left:1485px;top:229px;width:322px;height:227px;border:1px solid #1f2c7c;border-top-color:#2b3886;border-right:2px solid #8e96c6;border-radius:3px;"></div>
<div class="a" style="left:1576px;top:523px;width:163px;height:41px;background:#3860b2;border-radius:6px;"></div>
<div class="a" style="left:1576px;width:163px;text-align:center;top:533.92px;font-size:19px;line-height:19px;color:#fff;font-weight:bold">Submit</div>
</body></html>
